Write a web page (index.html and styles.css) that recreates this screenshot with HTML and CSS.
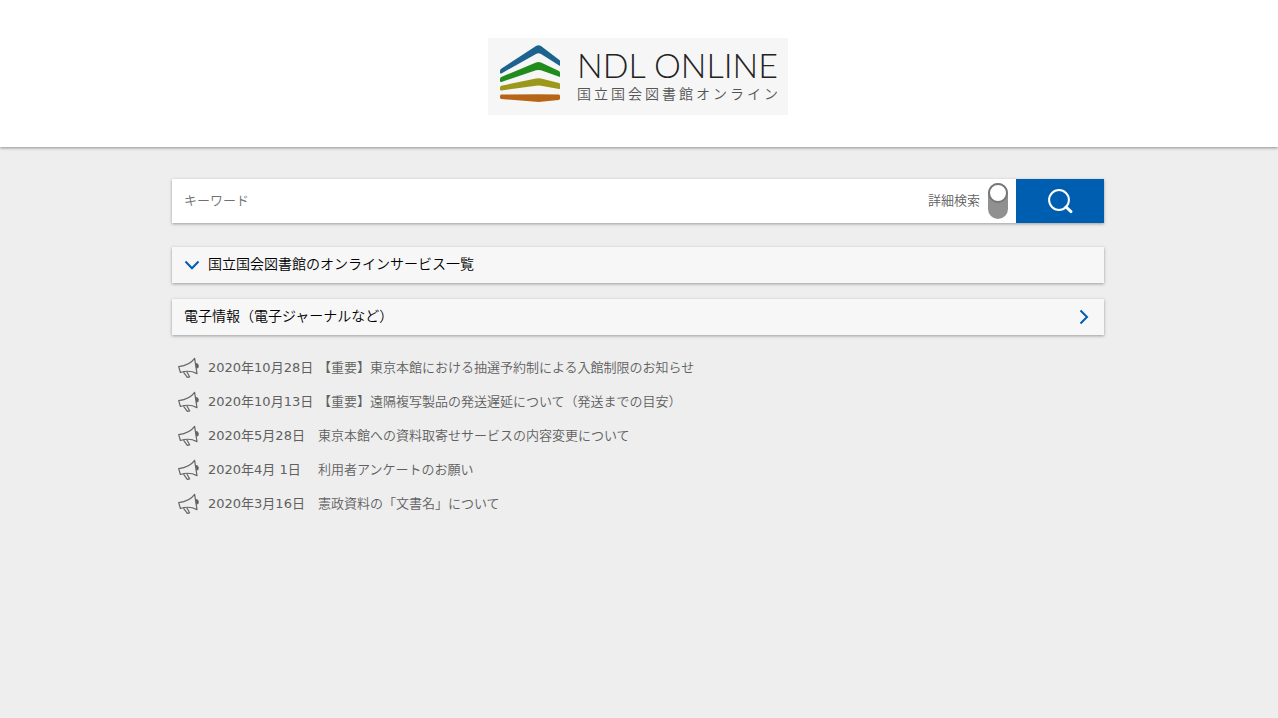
FILE: index.html
```html
<!DOCTYPE html>
<html lang="ja">
<head>
<meta charset="utf-8">
<meta name="viewport" content="width=device-width, initial-scale=1">
<title>国立国会図書館オンライン</title>
<link rel="stylesheet" href="styles.css">
</head>
<body>
<svg class="sprite" width="0" height="0" aria-hidden="true">
  <symbol id="megaphone" viewBox="0 0 24 24">
    <path d="M2.7 10.6C9 9.8 15.3 7 18.6 2.3L21 17.6C16 15 9.5 14.8 4.4 16.5Z"/>
    <path d="M7.5 16.2L11.3 21.4L13.6 20.8L10.8 15.8"/>
    <path class="fill" d="M20 7.6C22.6 7.5 23 11.5 20.7 12Z"/>
  </symbol>
</svg>

<header class="site-header">
  <h1 class="site-title">
    <a class="logo" href="#">
      <svg class="logo-mark" viewBox="0 0 60 58" aria-hidden="true">
        <path fill="#1c638f" d="M0 26Q0 24.600 1.200 23.700L36 1Q38.500-.6 41 1L60 15.500V21L41 9Q38.500 7.300 36 9L1.400 28.400Q0 29 0 27.500Z"/>
        <path fill="#1f8c1c" d="M0 34Q0 32.600 1.300 32L36 17.500Q38.500 16.500 41 17.500L59 26Q60 26.500 60 28V32L41 25.300Q38.500 24.500 36 25.300L1.400 37Q0 37.400 0 36Z"/>
        <path fill="#9c981b" d="M0 42.500Q0 41.100 1.300 40.700L36 33.500Q38.500 33 41 33.500L59 38Q60 38.300 60 39.500V43.500Q60 44.200 59 44L41 40.800Q38.500 40.400 36 40.800L1.400 45.500Q0 45.600 0 44.300Z"/>
        <path fill="#b66516" d="M0 51Q0 49.700 1.400 49.600L38.500 49.200L58.800 49.600Q60 49.800 60 51V53.500Q60 54.700 58.600 54.900L41 56.800Q38.500 57 36 56.800L1.400 54Q0 53.800 0 52.600Z"/>
      </svg>
      <span class="logo-text">
        <span class="logo-name">NDL ONLINE</span>
        <span class="logo-sub">国立国会図書館オンライン</span>
      </span>
    </a>
  </h1>
</header>

<main class="content">
  <form class="search">
    <input class="keyword" type="text" placeholder="キーワード" aria-label="キーワード">
    <label class="detail" for="detail">詳細検索
      <input class="toggle" type="checkbox" id="detail">
    </label>
    <button class="submit" type="button" aria-label="検索">
      <svg viewBox="0 0 28 28" aria-hidden="true"><circle cx="13" cy="13" r="9.900"/><path class="handle" d="M20 20L25 24.600"/></svg>
    </button>
  </form>

  <button class="panel services" type="button" aria-expanded="false">
    <svg class="chevron" viewBox="0 0 16 16" aria-hidden="true"><path d="M1.500 5.500L8 12.300L14.500 5.500"/></svg>
    国立国会図書館のオンラインサービス一覧
  </button>

  <a class="panel e-resources" href="#">
    <span>電子情報（電子ジャーナルなど）</span>
    <svg class="chevron" viewBox="0 0 16 16" aria-hidden="true"><path d="M4.500 2.500L11 9L4.500 15.500"/></svg>
  </a>

  <ul class="news">
    <li><svg class="news-icon" aria-hidden="true"><use href="#megaphone"/></svg><time>2020年10月28日</time><span>【重要】東京本館における抽選予約制による入館制限のお知らせ</span></li>
    <li><svg class="news-icon" aria-hidden="true"><use href="#megaphone"/></svg><time>2020年10月13日</time><span>【重要】遠隔複写製品の発送遅延について（発送までの目安）</span></li>
    <li><svg class="news-icon" aria-hidden="true"><use href="#megaphone"/></svg><time>2020年5月28日</time><span>東京本館への資料取寄せサービスの内容変更について</span></li>
    <li><svg class="news-icon" aria-hidden="true"><use href="#megaphone"/></svg><time>2020年4月 1日</time><span>利用者アンケートのお願い</span></li>
    <li><svg class="news-icon" aria-hidden="true"><use href="#megaphone"/></svg><time>2020年3月16日</time><span>憲政資料の「文書名」について</span></li>
  </ul>
</main>
</body>
</html>
```

FILE: styles.css
```css
*,
*::before {
  box-sizing: border-box;
}

body {
  margin: 0;
  background: #eee;
  color: #606060;
  font: 350 13px/20px "DejaVu Sans", "Noto Sans CJK JP", sans-serif;
}

.sprite {
  display: block;
}

.site-header {
  display: flex;
  justify-content: center;
  padding: 38px 2px 32px 0;
  background: #fff;
  box-shadow: 0 1px 3px rgba(0, 0, 0, 0.4);
}

.site-title {
  margin: 0;
  font-weight: normal;
}

.logo {
  display: flex;
  gap: 17px;
  width: 300px;
  padding: 7px 0 12px 12px;
  background: #f6f6f6;
  color: #222;
  text-decoration: none;
}

.logo-mark {
  flex: none;
  width: 60px;
  height: 58px;
}

.logo-text {
  display: flex;
  flex-direction: column;
  white-space: nowrap;
}

.logo-name {
  font: 300 34px/40px Lato, sans-serif;
}

.logo-sub {
  color: #555;
  font: 350 14px/16px "Noto Sans CJK JP", sans-serif;
  letter-spacing: 3px;
}

.content {
  max-width: 934px;
  margin: 0 auto;
  padding: 32px 2px 32px 0;
}

.search {
  display: flex;
  height: 44px;
  margin-bottom: 24px;
  background: #fff;
  box-shadow: 0 1px 3px rgba(0, 0, 0, 0.35);
}

.keyword {
  flex: 1;
  min-width: 0;
  padding: 0 12px;
  border: 0;
  background: none;
  color: #333;
  font: inherit;
}

.keyword::placeholder {
  color: #707070;
  opacity: 1;
}

.detail {
  display: flex;
  align-items: center;
  gap: 8px;
  padding-right: 8px;
}

.toggle {
  appearance: none;
  width: 20px;
  height: 36px;
  margin: 0;
  border-radius: 10px;
  background: #909090;
}

.toggle::before {
  content: "";
  display: block;
  width: 20px;
  height: 20px;
  border: 2px solid #777;
  border-radius: 50%;
  background: #fff;
}

.toggle:checked::before {
  margin-top: 16px;
}

.submit {
  display: flex;
  align-items: center;
  justify-content: center;
  width: 88px;
  padding: 0;
  border: 0;
  background: #005eb0;
}

.submit svg {
  width: 28px;
  height: 28px;
  fill: none;
  stroke: #fff;
  stroke-width: 2;
}

.submit .handle {
  stroke-width: 3;
  stroke-linecap: round;
}

.panel {
  display: flex;
  align-items: center;
  width: 100%;
  height: 36px;
  margin-bottom: 16px;
  padding: 0 12px 2px;
  border: 0;
  background: #f7f7f7;
  box-shadow: 0 1px 3px rgba(0, 0, 0, 0.35);
  color: #000;
  font: 350 14px/20px "DejaVu Sans", "Noto Sans CJK JP", sans-serif;
  text-align: left;
  text-decoration: none;
}

.services {
  gap: 8px;
}

.e-resources {
  justify-content: space-between;
}

.chevron {
  width: 16px;
  height: 16px;
  overflow: visible;
  fill: none;
  stroke: #005eb0;
  stroke-width: 2;
}

.news {
  margin: 0;
  padding: 0;
  list-style: none;
}

.news li {
  display: grid;
  grid-template-columns: 24px 102px 1fr;
  align-items: center;
  column-gap: 8px;
  min-height: 34px;
  padding-left: 4px;
}

.news time {
  font-weight: 400;
  white-space: nowrap;
}

.news-icon {
  width: 24px;
  height: 24px;
  fill: none;
  stroke: #666;
  stroke-width: 1.2;
  stroke-linejoin: round;
}

.fill {
  fill: #555;
}
```
